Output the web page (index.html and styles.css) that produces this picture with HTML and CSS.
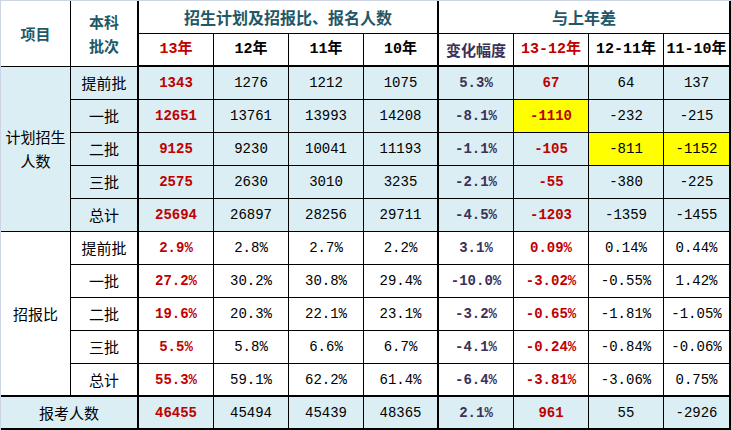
FILE: index.html
```html
<!DOCTYPE html>
<html lang="zh">
<head>
<meta charset="utf-8">
<title>招生计划及招报比</title>
<link rel="stylesheet" href="styles.css">
</head>
<body>
<div class="frame">
<table class="sheet">
  <colgroup>
    <col class="c-item"><col class="c-batch">
    <col class="c-num"><col class="c-num"><col class="c-num"><col class="c-num">
    <col class="c-num"><col class="c-num"><col class="c-num"><col class="c-last">
  </colgroup>
  <thead>
    <tr class="h1">
      <th rowspan="2" class="hd teal bt">项目</th>
      <th rowspan="2" class="hd teal bt two thick-r">本科<br>批次</th>
      <th colspan="4" class="hd teal title thick-r">招生计划及招报比、报名人数</th>
      <th colspan="4" class="hd teal title edge-r">与上年差</th>
    </tr>
    <tr class="h2 thick-b">
      <th class="yr red">13年</th>
      <th class="yr">12年</th>
      <th class="yr">11年</th>
      <th class="yr thick-r">10年</th>
      <th class="yr purple cjk">变化幅度</th>
      <th class="yr red">13-12年</th>
      <th class="yr">12-11年</th>
      <th class="yr edge-r">11-10年</th>
    </tr>
  </thead>
  <tbody>
    <tr class="blue">
      <td rowspan="5" class="sect multi">计划招生<br>人数</td>
      <td class="lbl thick-r">提前批</td>
      <td class="n red b">1343</td><td class="n">1276</td><td class="n">1212</td><td class="n thick-r">1075</td>
      <td class="n purple b">5.3%</td><td class="n red b">67</td><td class="n">64</td><td class="n edge-r">137</td>
    </tr>
    <tr class="blue">
      <td class="lbl thick-r">一批</td>
      <td class="n red b">12651</td><td class="n">13761</td><td class="n">13993</td><td class="n thick-r">14208</td>
      <td class="n purple b">-8.1%</td><td class="n red b hl">-1110</td><td class="n">-232</td><td class="n edge-r">-215</td>
    </tr>
    <tr class="blue">
      <td class="lbl thick-r">二批</td>
      <td class="n red b">9125</td><td class="n">9230</td><td class="n">10041</td><td class="n thick-r">11193</td>
      <td class="n purple b">-1.1%</td><td class="n red b">-105</td><td class="n hl">-811</td><td class="n hl edge-r">-1152</td>
    </tr>
    <tr class="blue">
      <td class="lbl thick-r">三批</td>
      <td class="n red b">2575</td><td class="n">2630</td><td class="n">3010</td><td class="n thick-r">3235</td>
      <td class="n purple b">-2.1%</td><td class="n red b">-55</td><td class="n">-380</td><td class="n edge-r">-225</td>
    </tr>
    <tr class="blue">
      <td class="lbl thick-r">总计</td>
      <td class="n red b">25694</td><td class="n">26897</td><td class="n">28256</td><td class="n thick-r">29711</td>
      <td class="n purple b">-4.5%</td><td class="n red b">-1203</td><td class="n">-1359</td><td class="n edge-r">-1455</td>
    </tr>
    <tr>
      <td rowspan="5" class="sect thick-b">招报比</td>
      <td class="lbl thick-r">提前批</td>
      <td class="n red b">2.9%</td><td class="n">2.8%</td><td class="n">2.7%</td><td class="n thick-r">2.2%</td>
      <td class="n purple b">3.1%</td><td class="n red b">0.09%</td><td class="n">0.14%</td><td class="n edge-r">0.44%</td>
    </tr>
    <tr>
      <td class="lbl thick-r">一批</td>
      <td class="n red b">27.2%</td><td class="n">30.2%</td><td class="n">30.8%</td><td class="n thick-r">29.4%</td>
      <td class="n purple b">-10.0%</td><td class="n red b">-3.02%</td><td class="n">-0.55%</td><td class="n edge-r">1.42%</td>
    </tr>
    <tr>
      <td class="lbl thick-r">二批</td>
      <td class="n red b">19.6%</td><td class="n">20.3%</td><td class="n">22.1%</td><td class="n thick-r">23.1%</td>
      <td class="n purple b">-3.2%</td><td class="n red b">-0.65%</td><td class="n">-1.81%</td><td class="n edge-r">-1.05%</td>
    </tr>
    <tr>
      <td class="lbl thick-r">三批</td>
      <td class="n red b">5.5%</td><td class="n">5.8%</td><td class="n">6.6%</td><td class="n thick-r">6.7%</td>
      <td class="n purple b">-4.1%</td><td class="n red b">-0.24%</td><td class="n">-0.84%</td><td class="n edge-r">-0.06%</td>
    </tr>
    <tr class="thick-b">
      <td class="lbl thick-r">总计</td>
      <td class="n red b">55.3%</td><td class="n">59.1%</td><td class="n">62.2%</td><td class="n thick-r">61.4%</td>
      <td class="n purple b">-6.4%</td><td class="n red b">-3.81%</td><td class="n">-3.06%</td><td class="n edge-r">0.75%</td>
    </tr>
    <tr class="blue last">
      <td colspan="2" class="lbl thick-r">报考人数</td>
      <td class="n red b">46455</td><td class="n">45494</td><td class="n">45439</td><td class="n thick-r">48365</td>
      <td class="n purple b">2.1%</td><td class="n red b">961</td><td class="n">55</td><td class="n edge-r">-2926</td>
    </tr>
  </tbody>
</table>
</div>
</body>
</html>
```

FILE: styles.css
```css
html, body {
  margin: 0;
  padding: 0;
  background: #ffffff;
}

.frame {
  width: 730px;
  height: 429px;
  border-top: 1px solid #cdd5e4;
  border-left: 1px solid #cdd5e4;
  overflow: hidden;
}

.sheet {
  table-layout: fixed;
  border-collapse: separate;
  border-spacing: 0;
  width: 730px;
  font-family: "Liberation Mono", "Noto Sans CJK SC", monospace;
  font-size: 14px;
  color: #000000;
}

.c-item { width: 70px; }
.c-batch { width: 68px; }
.c-num { width: 75px; }
.c-last { width: 67px; }

.sheet tr { height: 33px; }

.sheet th,
.sheet td {
  box-sizing: border-box;
  height: 33px;
  padding: 0;
  text-align: center;
  vertical-align: middle;
  border-right: 1px solid #000000;
  border-bottom: 1px solid #000000;
  white-space: nowrap;
  line-height: 18px;
}

.sheet .thick-r { border-right-width: 2px; }
.sheet .edge-r { border-right-width: 2px; }
.sheet tr.thick-b > th,
.sheet tr.thick-b > td,
.sheet .thick-b { border-bottom-width: 2px; }
.sheet tr.last > td { border-bottom-width: 2px; }

.hd {
  font-family: "Noto Sans CJK SC", sans-serif;
  font-weight: 700;
  font-size: 16px;
  line-height: 24px;
}

.bt { font-size: 15px; }
.sheet .two { line-height: 24px; }

.teal { color: #1f5866; }

.yr {
  font-family: "Liberation Mono", "Noto Sans CJK SC", monospace;
  font-weight: 700;
  font-size: 15px;
  line-height: 22px;
  color: #000000;
}

.yr.cjk {
  font-family: "Noto Sans CJK SC", sans-serif;
  font-size: 15px;
}

.red { color: #c00000; }
.purple { color: #3b3159; }
.yr.red { color: #c00000; }
.yr.purple { color: #3b3159; }

.blue > td { background: #daeef3; }
.hl,
.blue > td.hl { background: #ffff00; }

.lbl,
.sect {
  font-family: "Noto Sans CJK SC", sans-serif;
  font-size: 15px;
  font-weight: 400;
  line-height: 22px;
}

.sheet .multi {
  font-size: 15px;
  line-height: 24px;
}

.n { font-size: 14px; }
.b { font-weight: 700; }
```
